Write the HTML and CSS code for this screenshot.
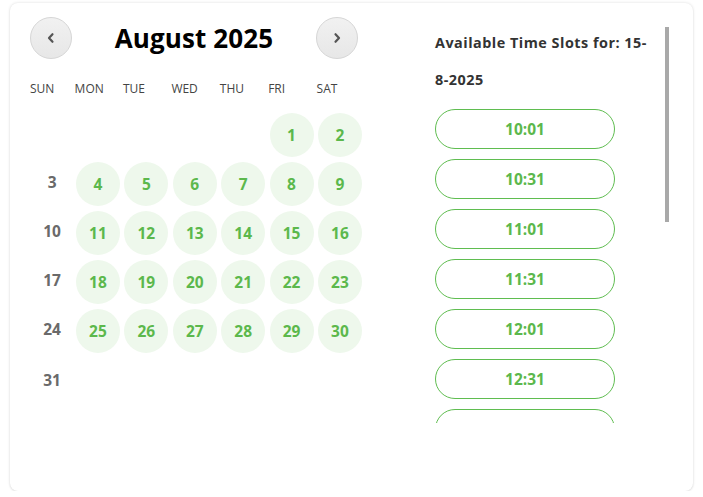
FILE: index.html
```html
<!DOCTYPE html>
<html lang="en">
<head>
<meta charset="utf-8">
<title>Booking calendar</title>
<link rel="stylesheet" href="styles.css">
</head>
<body>
<div class="card">
  <section class="calendar">
    <div class="cal-head">
      <button class="nav-btn" aria-label="Previous month">
        <svg width="12" height="14" viewBox="0 0 12 14"><path d="M7.5 3.2 L4 7 L7.5 10.8" fill="none" stroke="#555" stroke-width="2.2" stroke-linecap="round" stroke-linejoin="round"/></svg>
      </button>
      <h2 class="month">August 2025</h2>
      <button class="nav-btn" aria-label="Next month">
        <svg width="12" height="14" viewBox="0 0 12 14"><path d="M4.5 3.2 L8 7 L4.5 10.8" fill="none" stroke="#555" stroke-width="2.2" stroke-linecap="round" stroke-linejoin="round"/></svg>
      </button>
    </div>
    <div class="weekdays">
      <span class="wd wd-sun">SUN</span>
      <span class="wd">MON</span>
      <span class="wd">TUE</span>
      <span class="wd">WED</span>
      <span class="wd">THU</span>
      <span class="wd">FRI</span>
      <span class="wd">SAT</span>
    </div>
    <div class="days">
      <span class="blank"></span><span class="blank"></span><span class="blank"></span><span class="blank"></span><span class="blank"></span>
      <span class="day">1</span><span class="day">2</span>
      <span class="sun">3</span><span class="day">4</span><span class="day">5</span><span class="day">6</span><span class="day">7</span><span class="day">8</span><span class="day">9</span>
      <span class="sun">10</span><span class="day">11</span><span class="day">12</span><span class="day">13</span><span class="day">14</span><span class="day">15</span><span class="day">16</span>
      <span class="sun">17</span><span class="day">18</span><span class="day">19</span><span class="day">20</span><span class="day">21</span><span class="day">22</span><span class="day">23</span>
      <span class="sun">24</span><span class="day">25</span><span class="day">26</span><span class="day">27</span><span class="day">28</span><span class="day">29</span><span class="day">30</span>
      <span class="sun last">31</span>
    </div>
  </section>
  <section class="slots-panel">
    <div class="slots-scroll">
      <h3 class="slots-title">Available Time Slots for: 15-8-2025</h3>
      <div class="slots">
        <button class="slot">10:01</button>
        <button class="slot">10:31</button>
        <button class="slot">11:01</button>
        <button class="slot">11:31</button>
        <button class="slot">12:01</button>
        <button class="slot">12:31</button>
        <button class="slot">13:01</button>
        <button class="slot">13:31</button>
        <button class="slot">14:01</button>
        <button class="slot">14:31</button>
        <button class="slot">15:01</button>
        <button class="slot">15:31</button>
        <button class="slot">16:01</button>
        <button class="slot">16:31</button>
      </div>
    </div>
    <div class="scroll-thumb"></div>
  </section>
</div>
</body>
</html>
```
FILE: styles.css
```css
* { box-sizing: border-box; }
html, body { margin: 0; padding: 0; background: #fff; }
body { font-family: "Open Sans", "Liberation Sans", sans-serif; }

.card {
  margin: 3px 10px 0 10px;
  width: 683px;
  height: 488px;
  background: #fff;
  border-radius: 8px;
  box-shadow: 0 0 3px rgba(0,0,0,0.14), 0 1px 2px rgba(0,0,0,0.06);
  display: flex;
  align-items: flex-start;
  padding-top: 14px;
}

.calendar {
  margin-left: 17.6px;
  width: 334.4px;
}

.cal-head {
  margin-left: 2.4px;
  width: 328px;
  height: 42px;
  display: flex;
  align-items: center;
  justify-content: space-between;
}
.nav-btn {
  width: 42px;
  height: 42px;
  border-radius: 50%;
  border: 1px solid #d6d6d6;
  background: linear-gradient(#f1f1f1, #e7e7e7);
  display: flex;
  align-items: center;
  justify-content: center;
  padding: 0;
}
.month {
  margin: 0;
  font-size: 26px;
  font-weight: 700;
  color: #000;
  line-height: 42px;
  letter-spacing: 0.1px;
}

.weekdays {
  margin-top: 22px;
  display: grid;
  grid-template-columns: 46px repeat(6, 48.4px);
  margin-left: 1px;
}
.wd {
  font-size: 12px;
  color: #444;
  line-height: 16px;
}
.wd-sun { padding-left: 1.4px; }

.days {
  margin-top: 16px;
  display: grid;
  grid-template-columns: repeat(7, 44px);
  grid-auto-rows: 44px;
  column-gap: 4.4px;
  row-gap: 5px;
}
.day, .sun {
  display: flex;
  align-items: center;
  justify-content: center;
  font-size: 15.5px;
  font-weight: 700;
}
.day {
  border-radius: 50%;
  background: #eef8ec;
  color: #5cb84c;
}
.sun {
  color: #6a6a6a;
  padding-left: 5px;
  padding-bottom: 4px;
}
.sun.last { padding-bottom: 1px; }

.slots-panel {
  position: relative;
  margin-left: 58px;
  margin-top: 6.5px;
  width: 249px;
  height: 399px;
}
.slots-scroll {
  height: 100%;
  overflow: hidden;
  padding-left: 15px;
}
.scroll-thumb {
  position: absolute;
  right: 0;
  top: 3.5px;
  width: 4px;
  height: 195px;
  background: #a9a9a9;
}

.slots-title {
  margin: 0 0 11.5px 0;
  width: 218px;
  font-size: 14.4px;
  letter-spacing: 0.5px;
  font-weight: 700;
  color: #333;
  line-height: 37px;
}
.slots {
  display: flex;
  flex-direction: column;
  gap: 10px;
}
.slot {
  width: 180px;
  height: 40px;
  flex: none;
  border: 1px solid #5fbd50;
  border-radius: 20px;
  background: #fff;
  color: #5cb84c;
  font-family: "Open Sans", "Liberation Sans", sans-serif;
  font-size: 15.5px;
  font-weight: 700;
  padding: 0;
}
```
